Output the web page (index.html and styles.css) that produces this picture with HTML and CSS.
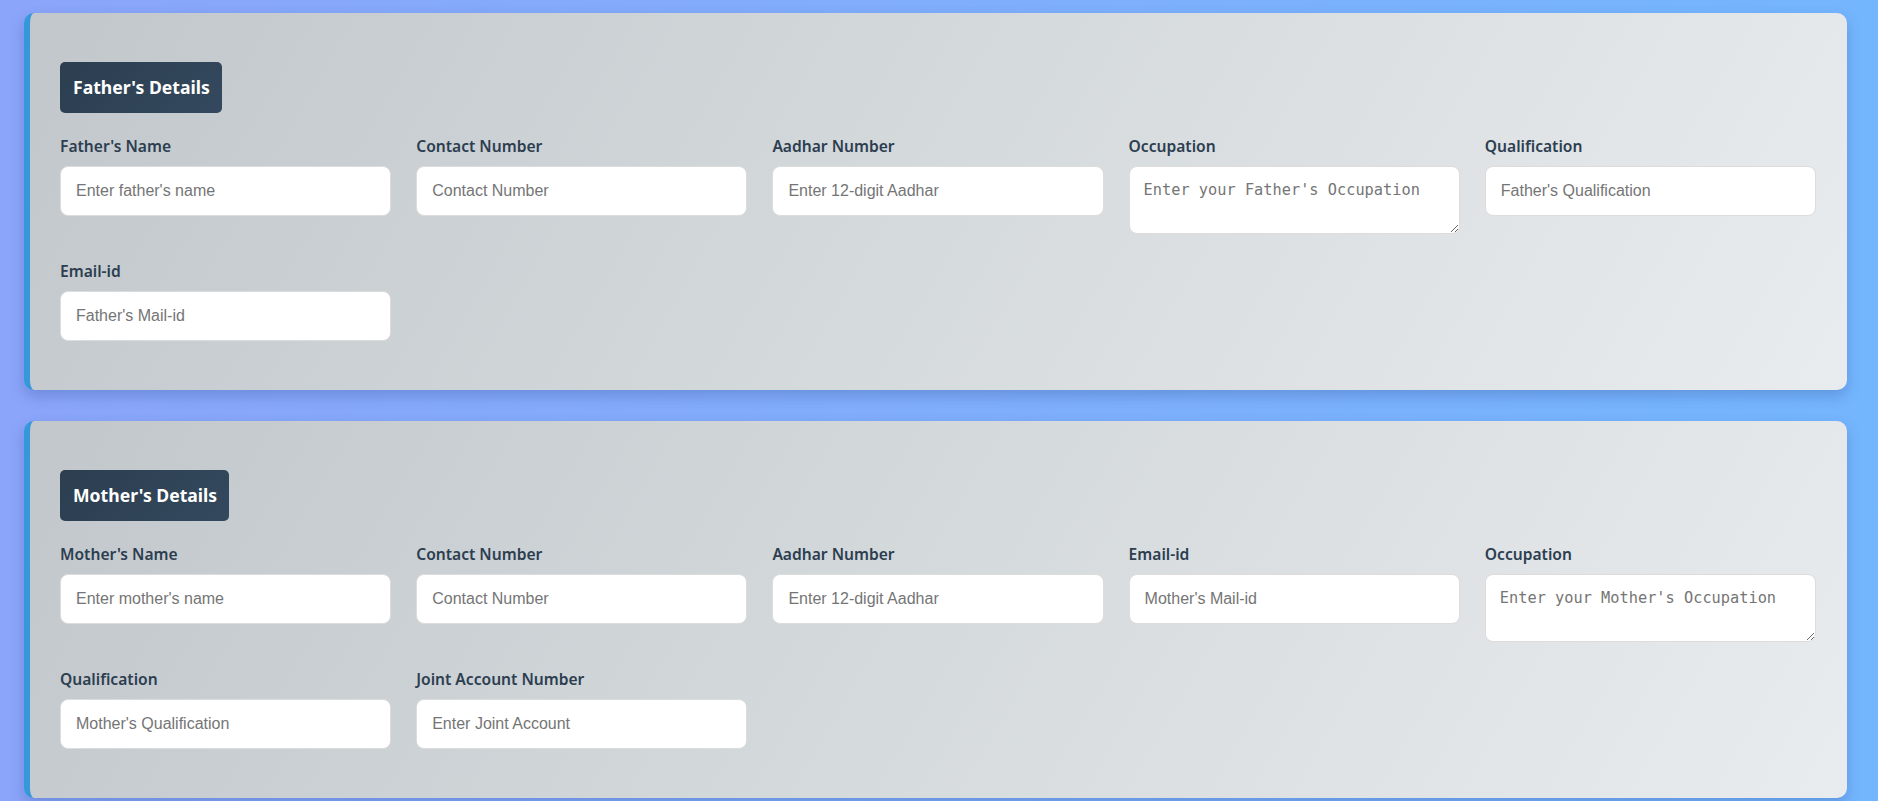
FILE: index.html
```html
<!DOCTYPE html>
<html lang="en">
<head>
<meta charset="UTF-8">
<title>Parent Details</title>
<link rel="stylesheet" href="styles.css">
</head>
<body>
<div class="page">
  <section class="card">
    <h2 class="badge">Father's Details</h2>
    <div class="grid">
      <div class="field">
        <label>Father's Name</label>
        <input type="text" placeholder="Enter father's name">
      </div>
      <div class="field">
        <label>Contact Number</label>
        <input type="text" placeholder="Contact Number">
      </div>
      <div class="field">
        <label>Aadhar Number</label>
        <input type="text" placeholder="Enter 12-digit Aadhar">
      </div>
      <div class="field">
        <label>Occupation</label>
        <textarea placeholder="Enter your Father's Occupation"></textarea>
      </div>
      <div class="field">
        <label>Qualification</label>
        <input type="text" placeholder="Father's Qualification">
      </div>
      <div class="field">
        <label>Email-id</label>
        <input type="text" placeholder="Father's Mail-id">
      </div>
    </div>
  </section>
  <section class="card">
    <h2 class="badge">Mother's Details</h2>
    <div class="grid">
      <div class="field">
        <label>Mother's Name</label>
        <input type="text" placeholder="Enter mother's name">
      </div>
      <div class="field">
        <label>Contact Number</label>
        <input type="text" placeholder="Contact Number">
      </div>
      <div class="field">
        <label>Aadhar Number</label>
        <input type="text" placeholder="Enter 12-digit Aadhar">
      </div>
      <div class="field">
        <label>Email-id</label>
        <input type="text" placeholder="Mother's Mail-id">
      </div>
      <div class="field">
        <label>Occupation</label>
        <textarea placeholder="Enter your Mother's Occupation"></textarea>
      </div>
      <div class="field">
        <label>Qualification</label>
        <input type="text" placeholder="Mother's Qualification">
      </div>
      <div class="field">
        <label>Joint Account Number</label>
        <input type="text" placeholder="Enter Joint Account">
      </div>
    </div>
  </section>
</div>
</body>
</html>
```
FILE: styles.css
```css
html, body {
  margin: 0;
  padding: 0;
}
body {
  min-height: 801px;
  background: linear-gradient(to right, #8ba5f9 0%, #80aefb 50%, #74b6fe 100%);
  font-family: "Noto Sans", "Open Sans", sans-serif;
}
.page {
  padding: 13px 31px 0 24px;
  display: flex;
  flex-direction: column;
  gap: 31px;
}
.card {
  background: linear-gradient(120deg, #c2c7cc 0%, #d3d8db 45%, #e9ecee 100%);
  border-left: 6px solid #3498db;
  border-radius: 10px;
  box-shadow: 0 6px 14px rgba(40, 70, 140, 0.28);
  padding: 49px 31px 49px 30px;
}
.badge {
  display: inline-block;
  margin: 0 0 21px 0;
  padding: 0 12px 0 13px;
  height: 51px;
  line-height: 51px;
  background: linear-gradient(135deg, #2c3e50, #34495e);
  color: #ffffff;
  font-size: 17.6px;
  font-weight: 700;
  border-radius: 5px;
}
.grid {
  display: grid;
  grid-template-columns: repeat(5, 1fr);
  column-gap: 25px;
  row-gap: 25px;
  align-items: start;
}
.field {
  display: flex;
  flex-direction: column;
}
.field label {
  font-size: 15.6px;
  font-weight: 600;
  color: #2c3e50;
  line-height: 24px;
  margin-bottom: 8px;
}
.field input,
.field textarea {
  box-sizing: border-box;
  width: 100%;
  border: 1px solid #dcdcdc;
  border-radius: 8px;
  background: #ffffff;
  margin: 0;
  outline: none;
}
.field input {
  height: 50px;
  padding: 0 15px;
  font-family: "Liberation Sans", Arial, sans-serif;
  font-size: 16px;
  color: #333;
}
.field textarea {
  height: 68px;
  padding: 14px 14px 12px;
  font-family: "DejaVu Sans Mono", "Liberation Mono", monospace;
  font-size: 15.3px;
  line-height: 18px;
  resize: both;
}
.field input::placeholder {
  color: #757575;
}
.field textarea::placeholder {
  color: #757575;
}
```
